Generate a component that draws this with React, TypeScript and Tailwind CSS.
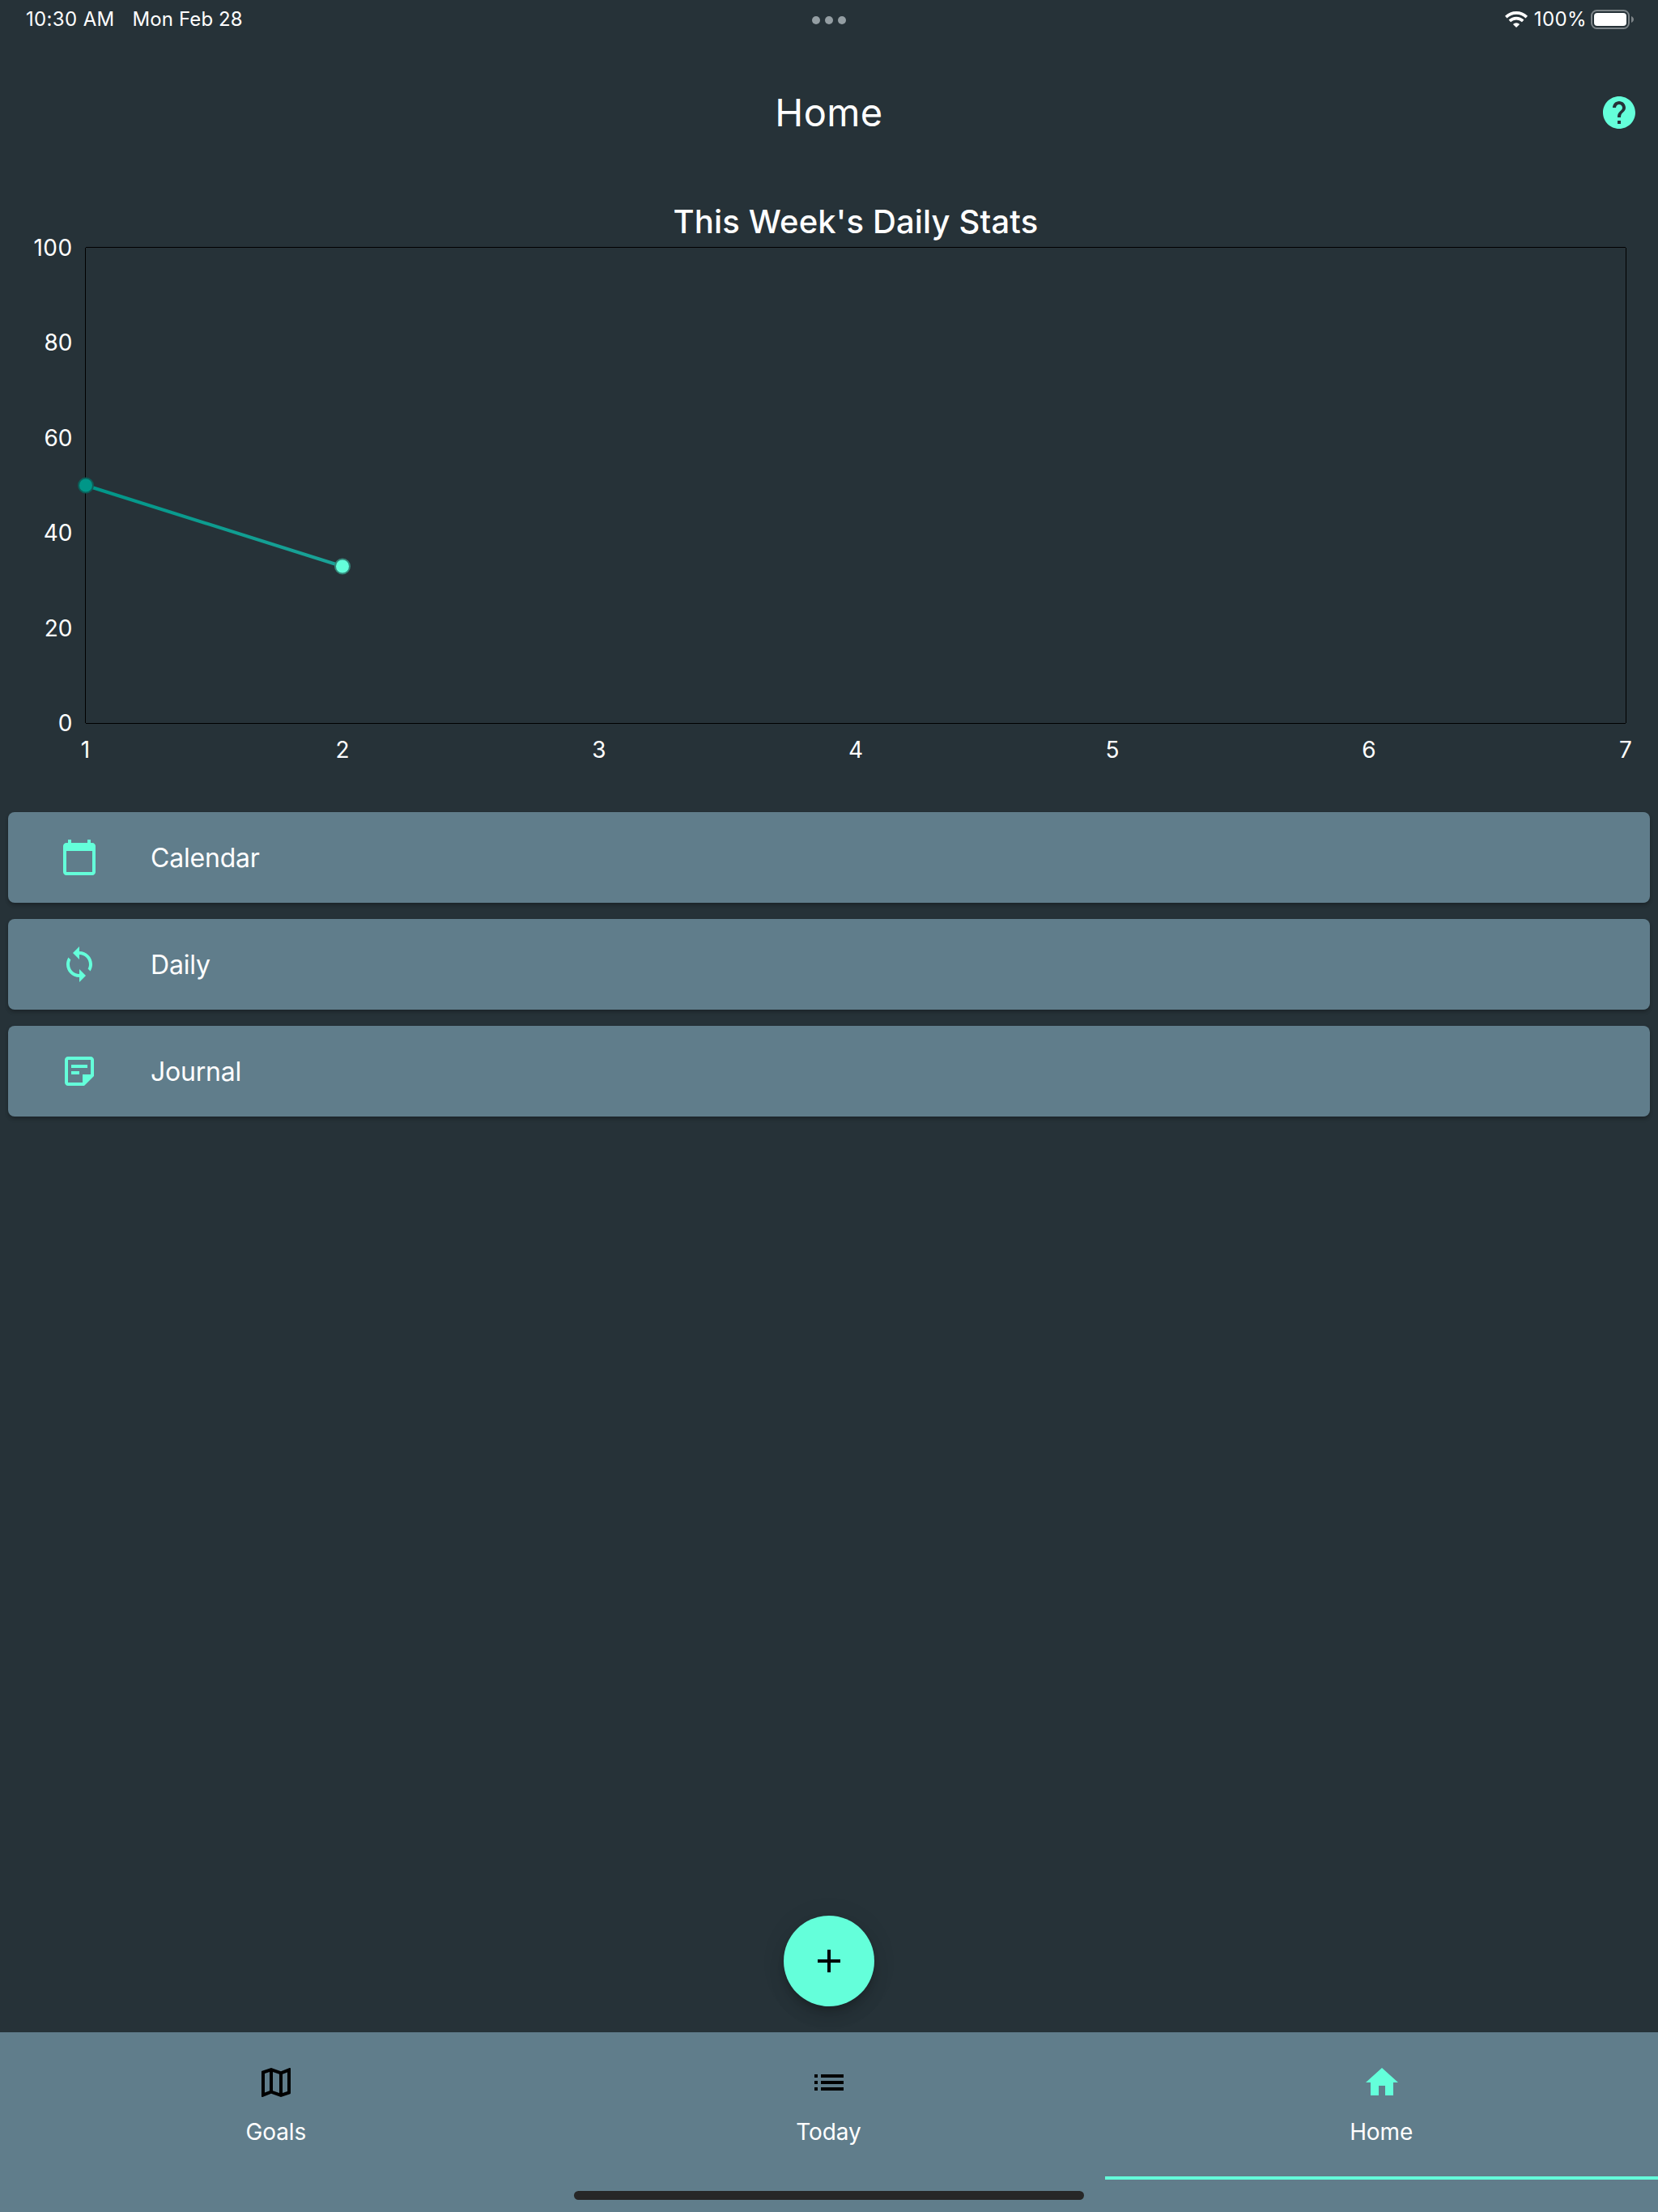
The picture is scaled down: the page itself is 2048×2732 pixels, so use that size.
import React from "react";

const paths = {
  help: "M12 2C6.48 2 2 6.48 2 12s4.48 10 10 10 10-4.48 10-10S17.52 2 12 2zm1 17h-2v-2h2v2zm2.07-7.75l-.9.92C13.45 12.9 13 13.5 13 15h-2v-.5c0-1.1.45-2.1 1.17-2.83l1.24-1.26c.37-.36.59-.86.59-1.41 0-1.1-.9-2-2-2s-2 .9-2 2H8c0-2.21 1.79-4 4-4s4 1.79 4 4c0 .88-.36 1.68-.93 2.25z",
  calendar: "M20 3h-1V1h-2v2H7V1H5v2H4c-1.1 0-2 .9-2 2v16c0 1.1.9 2 2 2h16c1.1 0 2-.9 2-2V5c0-1.1-.9-2-2-2zm0 18H4V8h16v13z",
  sync: "M12 4V1L8 5l4 4V6c3.31 0 6 2.69 6 6 0 1.01-.25 1.97-.7 2.8l1.46 1.46C19.54 15.03 20 13.57 20 12c0-4.42-3.58-8-8-8zm0 14c-3.31 0-6-2.69-6-6 0-1.01.25-1.97.7-2.8L5.24 7.74C4.46 8.97 4 10.43 4 12c0 4.42 3.58 8 8 8v3l4-4-4-4v3z",
  note: "M19 5v9h-5v5H5V5h14m0-2H5c-1.1 0-2 .9-2 2v14c0 1.1.9 2 2 2h10l6-6V5c0-1.1-.9-2-2-2zM12 14H7v-2h5v2zm5-4H7V8h10v2z",
  map: "M20.5 3l-.16.03L15 5.1 9 3 3.36 4.9c-.21.07-.36.25-.36.48V20.5c0 .28.22.5.5.5l.16-.03L9 18.9l6 2.1 5.64-1.9c.21-.07.36-.25.36-.48V3.5c0-.28-.22-.5-.5-.5zM10 5.47l4 1.4v11.66l-4-1.4V5.47zm-5 .99l3-1.01v11.7l-3 1.16V6.46zm14 11.08l-3 1.01V6.86l3-1.16v11.84z",
  list: "M3 13h2v-2H3v2zm0 4h2v-2H3v2zm0-8h2V7H3v2zm4 4h14v-2H7v2zm0 4h14v-2H7v2zM7 7v2h14V7H7z",
  home: "M10 20v-6h4v6h5v-8h3L12 3 2 12h3v8z",
  add: "M19 13h-6v6h-2v-6H5v-2h6V5h2v6h6v2z",
};

function Icon({ name }: { name: keyof typeof paths }) {
  return (
    <svg viewBox="0 0 24 24" className="size-12 shrink-0 fill-current">
      <path d={paths[name]} />
    </svg>
  );
}

function StatusBar() {
  return (
    <div className="flex h-12 items-start justify-between pl-8 pr-[29px] text-[24px] leading-[48px]">
      <div className="flex w-[900px] gap-[22px]">
        <span className="tracking-[0.35px]">10:30 AM</span>
        <span className="tracking-[0.1px]">Mon Feb 28</span>
      </div>
      <div className="flex gap-1.5 pr-[3px] pt-5">
        <i className="size-2.5 rounded-full bg-[#949ea3]" />
        <i className="size-2.5 rounded-full bg-[#949ea3]" />
        <i className="size-2.5 rounded-full bg-[#949ea3]" />
      </div>
      <div className="flex w-[900px] items-start justify-end">
        <svg viewBox="0 0 28 20" className="mr-2 mt-3.5 h-5 w-7" fill="none" stroke="white" strokeWidth="3.6">
          <path d="M1.2 7.1A18.3 18.3 0 0 1 26.8 7.1" />
          <path d="M5.8 11.9A11.8 11.8 0 0 1 22.2 11.9" />
          <path d="M14 20l-4.1-4.1a5.8 5.8 0 0 1 8.2 0z" fill="white" stroke="none" />
        </svg>
        <span className="mr-[5px] tracking-[0.4px]">100%</span>
        <svg viewBox="0 0 54 24" className="mt-3 h-6 w-[54px]">
          <rect x="1" y="1" width="46" height="22" rx="6.5" fill="none" stroke="#7d8488" strokeWidth="2" />
          <rect x="4" y="4" width="40" height="16" rx="4" fill="white" />
          <path d="M50 8c4 1.5 4 6.5 0 8z" fill="#7d8488" />
        </svg>
      </div>
    </div>
  );
}

function Chart() {
  return (
    <svg viewBox="0 0 2048 710" className="block h-[710px] w-full" fill="white">
      <path d="M105.5 63V650M106 62.5H2008M2008.5 63V650M106 650.5H2008" fill="none" stroke="black" />
      <g fontSize="28" textAnchor="end">
        {[100, 80, 60, 40, 20, 0].map((v, i) => (
          <text key={v} x="89.5" y={72.5 + i * 117.5} letterSpacing={v === 100 ? 0.4 : 0}>{v}</text>
        ))}
      </g>
      <g fontSize="28" textAnchor="middle">
        {[1, 2, 3, 4, 5, 6, 7].map((v, i) => (
          <text key={v} x={i === 0 ? 105.5 : 106 + i * 317} y="692.5">{v}</text>
        ))}
      </g>
      <defs>
        <linearGradient id="trend" x1="106" x2="423" y1="0" y2="0" gradientUnits="userSpaceOnUse">
          <stop offset="0" stopColor="#009688" />
          <stop offset="1" stopColor="#1ba398" />
        </linearGradient>
      </defs>
      <path d="M106 356.5L423 456.5" stroke="url(#trend)" strokeWidth="4" />
      <circle cx="106" cy="356.5" r="9" fill="#009688" stroke="#0c5f59" strokeWidth="2" />
      <circle cx="423" cy="456.5" r="9" fill="#64ffda" stroke="#35877a" strokeWidth="2" />
    </svg>
  );
}

function Row({ icon, label }: { icon: keyof typeof paths; label: string }) {
  return (
    <div className="flex h-28 items-center rounded-lg bg-[#607d8b] pl-16 shadow-[0_2px_4px_rgba(0,0,0,0.22),0_4px_5px_rgba(0,0,0,0.08)]">
      <span className="text-[#64ffda]"><Icon name={icon} /></span>
      <span className="ml-16 pt-px text-[32px] leading-[40px] tracking-[-0.2px]">{label}</span>
    </div>
  );
}

function Tab({ icon, label, active }: { icon: keyof typeof paths; label: string; active?: boolean }) {
  return (
    <div className={active ? "flex h-[182px] flex-1 flex-col items-center border-b-4 border-[#64ffda] pt-[38px]" : "flex h-[182px] flex-1 flex-col items-center pt-[38px]"}>
      <span className={active ? "text-[#64ffda]" : "text-black"}><Icon name={icon} /></span>
      <span className="mt-[17px] pr-px text-[28px] leading-10 tracking-[-0.1px]">{label}</span>
    </div>
  );
}

export default function App() {
  return (
    <div className="flex h-[2732px] w-[2048px] flex-col overflow-hidden bg-[#263238] font-['Inter',sans-serif] text-white">
      <StatusBar />
      <header className="grid h-[182px] grid-cols-[1fr_auto_1fr] items-center pr-6">
        <span />
        <h1 className="pl-6 text-[47px] leading-[56px] tracking-[0.4px]">Home</h1>
        <span className="justify-self-end text-[#64ffda]"><Icon name="help" /></span>
      </header>
      <section className="h-[723px]">
        <h2 className="h-[13px] pl-[66px] text-center text-[40px] font-medium leading-[88px] tracking-[0.15px]">This Week's Daily Stats</h2>
        <Chart />
      </section>
      <main className="mt-[50px] flex flex-1 flex-col gap-5 px-2.5">
        <Row icon="calendar" label="Calendar" />
        <Row icon="sync" label="Daily" />
        <Row icon="note" label="Journal" />
      </main>
      <div className="mb-8 flex size-28 items-center justify-center self-center rounded-full bg-[#64ffda] text-black shadow-[0_6px_10px_-2px_rgba(0,0,0,0.16),0_12px_20px_rgba(0,0,0,0.12),0_2px_36px_rgba(0,0,0,0.06)]">
        <Icon name="add" />
      </div>
      <nav className="h-[222px] bg-[#607d8b]">
        <div className="flex">
          <Tab icon="map" label="Goals" />
          <Tab icon="list" label="Today" />
          <Tab icon="home" label="Home" active />
        </div>
        <div className="mx-auto mt-3.5 h-[11px] w-[630px] rounded-full bg-[#272727]" />
      </nav>
    </div>
  );
}
